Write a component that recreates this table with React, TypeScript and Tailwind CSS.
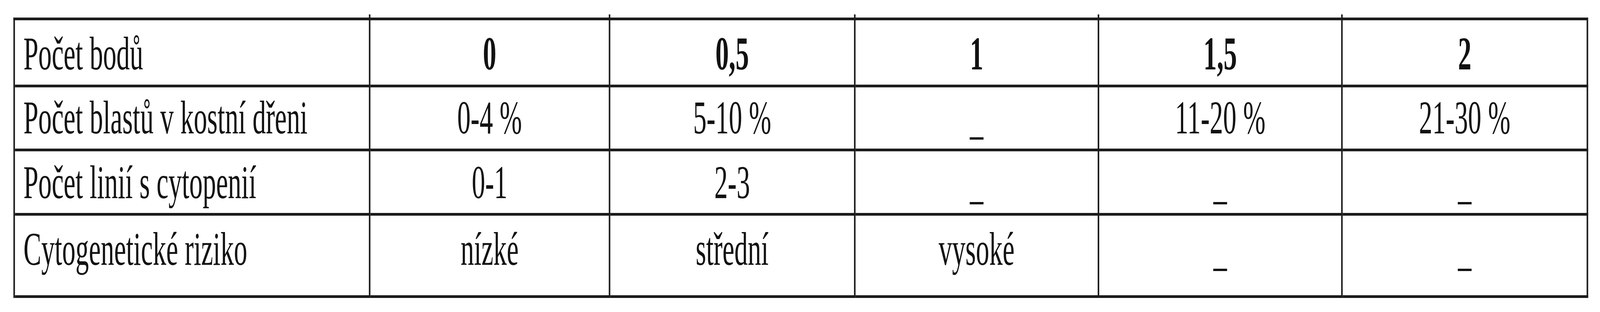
import { useState } from "react";

// the table is laid out for a 7170px wide page
const PAGE_W = 7170;

const ROWS: { label: string; cells: string[]; pad: string; head?: boolean }[] = [
  { label: "Počet bodů", cells: ["0", "0,5", "1", "1,5", "2"], pad: "pt-[26px]", head: true },
  { label: "Počet blastů v kostní dřeni", cells: ["0-4 %", "5-10 %", "_", "11-20 %", "21-30 %"], pad: "pt-[18px]" },
  { label: "Počet linií s cytopenií", cells: ["0-1", "2-3", "_", "_", "_"], pad: "pt-[20px]" },
  { label: "Cytogenetické riziko", cells: ["nízké", "střední", "vysoké", "_", "_"], pad: "pt-[26px]" },
];

export default function App() {
  const [scale] = useState(() => (typeof window === "undefined" ? 1 : window.innerWidth / PAGE_W));

  return (
    <div className="h-[800px] w-full overflow-hidden bg-white">
      <div
        className="h-[800px] w-[7170px] origin-top-left pl-[60px] pt-[45px] font-['Liberation_Serif','Times_New_Roman',serif] text-[120px] leading-[120px] text-[#121212]"
        style={{ transform: `scaleX(${scale})` }}
      >
        <div className="grid w-max grid-cols-[1593px_1075px_1099px_1092px_1091px_1100px] grid-rows-[172px_164px_165px_211px] border-l-[7px] border-t-[7px] border-[#1c1c1c]">
          {ROWS.map((row) => (
            <div key={row.label} className="contents">
              <div className={`whitespace-nowrap border-b-[7px] border-r-[7px] border-[#1c1c1c] pl-[38px] ${row.pad}`}>
                {row.label}
              </div>
              {row.cells.map((c, i) => (
                <div
                  key={i}
                  className={`relative whitespace-nowrap border-b-[7px] border-r-[7px] border-[#1c1c1c] text-center ${row.pad} ${row.head ? "font-bold" : ""}`}
                >
                  {row.head && <span className="absolute left-[-7px] top-[-15px] h-[8px] w-[7px] bg-[#1c1c1c]" />}
                  {c}
                </div>
              ))}
            </div>
          ))}
        </div>
      </div>
    </div>
  );
}
